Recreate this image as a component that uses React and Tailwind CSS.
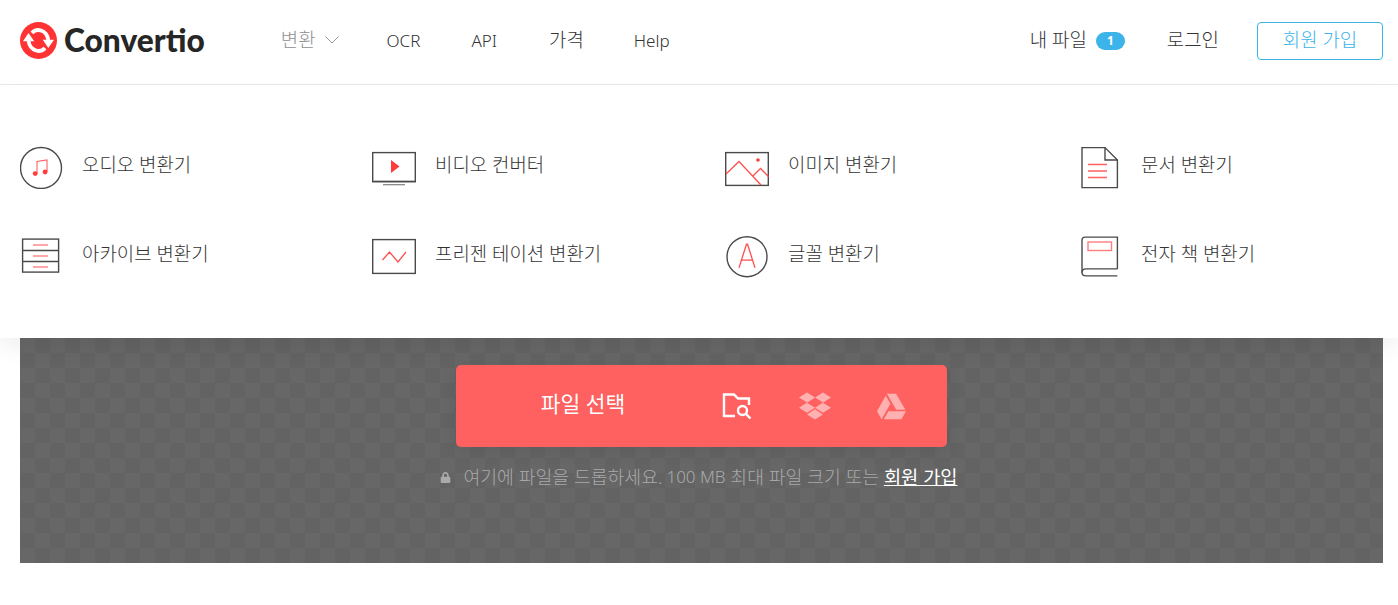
import React from "react";
import { FaDropbox, FaGoogleDrive, FaLock } from "react-icons/fa";

const RED = "#ff3b3b";
const GR = "#4a4a4a";

const Audio = () => (
  <svg width="44" height="44" viewBox="0 -1 44 44" fill="none">
    <circle cx="21" cy="22" r="20.5" stroke={GR} strokeWidth="1.4" />
    <path d="M17 27.5V15.5L27 14V26" stroke={RED} strokeWidth="1.1" opacity=".8" />
    <circle cx="15.2" cy="27.6" r="2.4" fill={RED} />
    <circle cx="25.1" cy="26" r="2.4" fill={RED} />
  </svg>
);
const Video = () => (
  <svg className="-ml-px mr-px" width="44" height="44" viewBox="0 0 44 44" fill="none">
    <rect x="0.7" y="7.6" width="42.6" height="29" stroke={GR} strokeWidth="1.4" />
    <path d="M0 36.5H44" stroke={GR} strokeWidth="1.6" />
    <path d="M11 39.7H33" stroke={GR} strokeWidth="1.2" opacity=".7" />
    <path d="M19 15L27.5 21.5L19 28Z" fill={RED} />
  </svg>
);
const Image = () => (
  <svg className="-ml-px mr-px" width="44" height="44" viewBox="0 0 44 44" fill="none">
    <rect x="0.7" y="7.6" width="42.6" height="32.8" stroke={GR} strokeWidth="1.4" />
    <path d="M1 29L14 16.5L36 40" stroke={RED} strokeWidth="1.3" opacity=".9" />
    <path d="M28 31L35.5 23.5L44 32" stroke={RED} strokeWidth="1.3" opacity=".9" />
    <circle cx="33" cy="15" r="1.8" fill={RED} />
  </svg>
);
const Doc = () => (
  <svg width="44" height="44" viewBox="0 -1 44 44" fill="none">
    <path d="M3 1.6H26L38.4 14V41.6H3Z" stroke={GR} strokeWidth="1.4" />
    <path d="M26 1.6V14H38.4" stroke={GR} strokeWidth="1.4" />
    <path d="M9 18.5H28M9 25H28M9 31.5H28" stroke={RED} strokeWidth="1.3" opacity=".8" />
  </svg>
);
const Archive = () => (
  <svg width="44" height="44" viewBox="0 -2.5 44 44" fill="none">
    <rect x="2.6" y="2.6" width="36" height="33" stroke={GR} strokeWidth="1.4" />
    <path d="M2 14H39M2 25H39" stroke={GR} strokeWidth="1.4" />
    <path d="M13 8.5H28M13 19.5H28M13 30.5H28" stroke={RED} strokeWidth="1.2" opacity=".9" />
  </svg>
);
const Pres = () => (
  <svg className="-ml-px mr-px" width="44" height="44" viewBox="0 0 44 44" fill="none">
    <rect x="0.7" y="5.6" width="42.6" height="33.8" stroke={GR} strokeWidth="1.4" />
    <path d="M10.5 26L17.5 18L26 28L34 18" stroke={RED} strokeWidth="1.3" opacity=".9" />
  </svg>
);
const Font = () => (
  <svg className="-ml-px mr-px" width="44" height="44" viewBox="0 -0.7 44 44" fill="none">
    <circle cx="22" cy="22" r="20" stroke={GR} strokeWidth="1.4" />
    <path d="M14 33L21.5 9.5H22.5L30 33M16.5 25.5H27.5" stroke={RED} strokeWidth="1.3" opacity=".9" />
  </svg>
);
const Book = () => (
  <svg width="44" height="44" viewBox="0 -1.5 44 44" fill="none">
    <path d="M38.4 33.4V1.6H6C4 1.6 3 3 3 5V37C3 39.5 4.5 40.4 7 40.4H38.4" stroke={GR} strokeWidth="1.4" />
    <path d="M3 37C3 34.5 4.5 33.4 7 33.4H38.4" stroke={GR} strokeWidth="1.4" />
    <rect x="9" y="6.5" width="23.5" height="8.5" stroke={RED} strokeWidth="1.4" opacity=".65" />
  </svg>
);

const items = [
  ["오디오 변환기", Audio],
  ["비디오 컨버터", Video],
  ["이미지 변환기", Image],
  ["문서 변환기", Doc],
  ["아카이브 변환기", Archive],
  ["프리젠 테이션 변환기", Pres],
  ["글꼴 변환기", Font],
  ["전자 책 변환기", Book],
];

export default function App() {
  return (
    <div className="min-h-[605px] bg-white font-['Noto_Sans','Noto_Sans_CJK_KR',sans-serif] text-[17px] font-light text-[#333]">
      <header className="flex h-[85px] items-center border-b border-[#e8e8e8] pb-[3px] pl-5 pr-[15px]">
        <div className="flex items-center">
          <svg width="37" height="37" viewBox="0 0 37 37">
            <circle cx="18.5" cy="18.5" r="18.5" fill="#ff3333" />
            <path d="M12 11C14.5 8 18 7.5 21 8.5C25 9.8 27.5 13 28.3 18" fill="none" stroke="#fff" strokeWidth="3.8" />
            <path d="M22.8 17.7H34L28.3 26Z" fill="#fff" />
            <path d="M8.5 19C9.3 24 12 27.2 16 28.5C19 29.5 22.5 29 25 26" fill="none" stroke="#fff" strokeWidth="3.8" />
            <path d="M3 19.3H14.2L8.5 11Z" fill="#fff" />
          </svg>
          <span className="ml-[7px] font-['Lato',sans-serif] text-[31.7px] leading-none font-black text-[#262626]">Convertio</span>
        </div>
        <nav className="ml-[76px] flex items-center">
          <span className="text-[18.9px] text-[#8f8f8f]">변환</span>
          <svg className="ml-[9px]" width="14" height="8" viewBox="0 0 14 8" fill="none">
            <path d="M0.5 0.5L7 7L13.5 0.5" stroke="#999" strokeWidth="1" />
          </svg>
          <span className="ml-[48px]">OCR</span>
          <span className="ml-[51px]">API</span>
          <span className="ml-[52px] text-[18.9px]">가격</span>
          <span className="ml-[50px]">Help</span>
        </nav>
        <div className="ml-auto flex items-center">
          <span className="text-[18.9px]">내 파일</span>
          <span className="ml-[9px] flex h-[18px] w-[29px] items-center justify-center rounded-full bg-[#3cb4ea] text-[12px] font-bold text-white">1</span>
          <span className="ml-[42px] text-[18.9px]">로그인</span>
          <span className="ml-[38px] flex h-[38px] w-[126px] items-center justify-center rounded-[4px] border border-[#3cb4ea] text-[18.9px] text-[#3cb4ea]">회원 가입</span>
        </div>
      </header>
      <section className="relative z-10 grid h-[253px] grid-cols-[repeat(4,353px)] grid-rows-[89px_89px] content-center bg-white pl-[20px] shadow-[0_10px_20px_rgba(0,0,0,0.06)]">
        {items.map(([label, Icon]) => (
          <div key={label} className="flex items-center gap-[18px]">
            <Icon />
            <span className="pb-[3px] text-[18.9px]">{label}</span>
          </div>
        ))}
      </section>
      <main className="mx-5 mr-[15px] flex h-[225px] flex-col items-center bg-[#656565] bg-[conic-gradient(#636363_25%,#676767_0_50%,#636363_0_75%,#676767_0)] bg-[length:30px_30px] pt-[27px]">
        <div className="flex h-[82px] w-[491px] items-center rounded-[5px] bg-[#ff6060] shadow-[0_4px_16px_rgba(0,0,0,0.08)]">
          <span className="w-[254px] pb-[3px] text-center text-[21.5px] font-normal text-white">파일 선택</span>
          <svg className="ml-[12px]" width="30" height="28" viewBox="0 0 30 28" fill="none" stroke="#fff" strokeWidth="2.4">
            <path d="M13 24H2V2.5H12L16 6.5H27V13" />
            <circle cx="20.5" cy="18.5" r="4.5" />
            <path d="M24 22L28.5 26.5" />
          </svg>
          <FaDropbox className="ml-[47px] text-white/50" size={32} />
          <FaGoogleDrive className="ml-[46px] text-white/50" size={29} />
        </div>
        <p className="mt-[18px] flex items-center pr-[5px] text-[18.3px] leading-[24px] text-[#aaa]">
          <FaLock className="mr-[12px] text-[#aaa]" size={11} />
          여기에 파일을 드롭하세요. <span className="ml-[4px] text-[17px]">100 MB</span>&nbsp;최대 파일 크기 또는&nbsp;
          <span className="text-[18.7px] font-normal text-white underline">회원 가입</span>
        </p>
      </main>
    </div>
  );
}
